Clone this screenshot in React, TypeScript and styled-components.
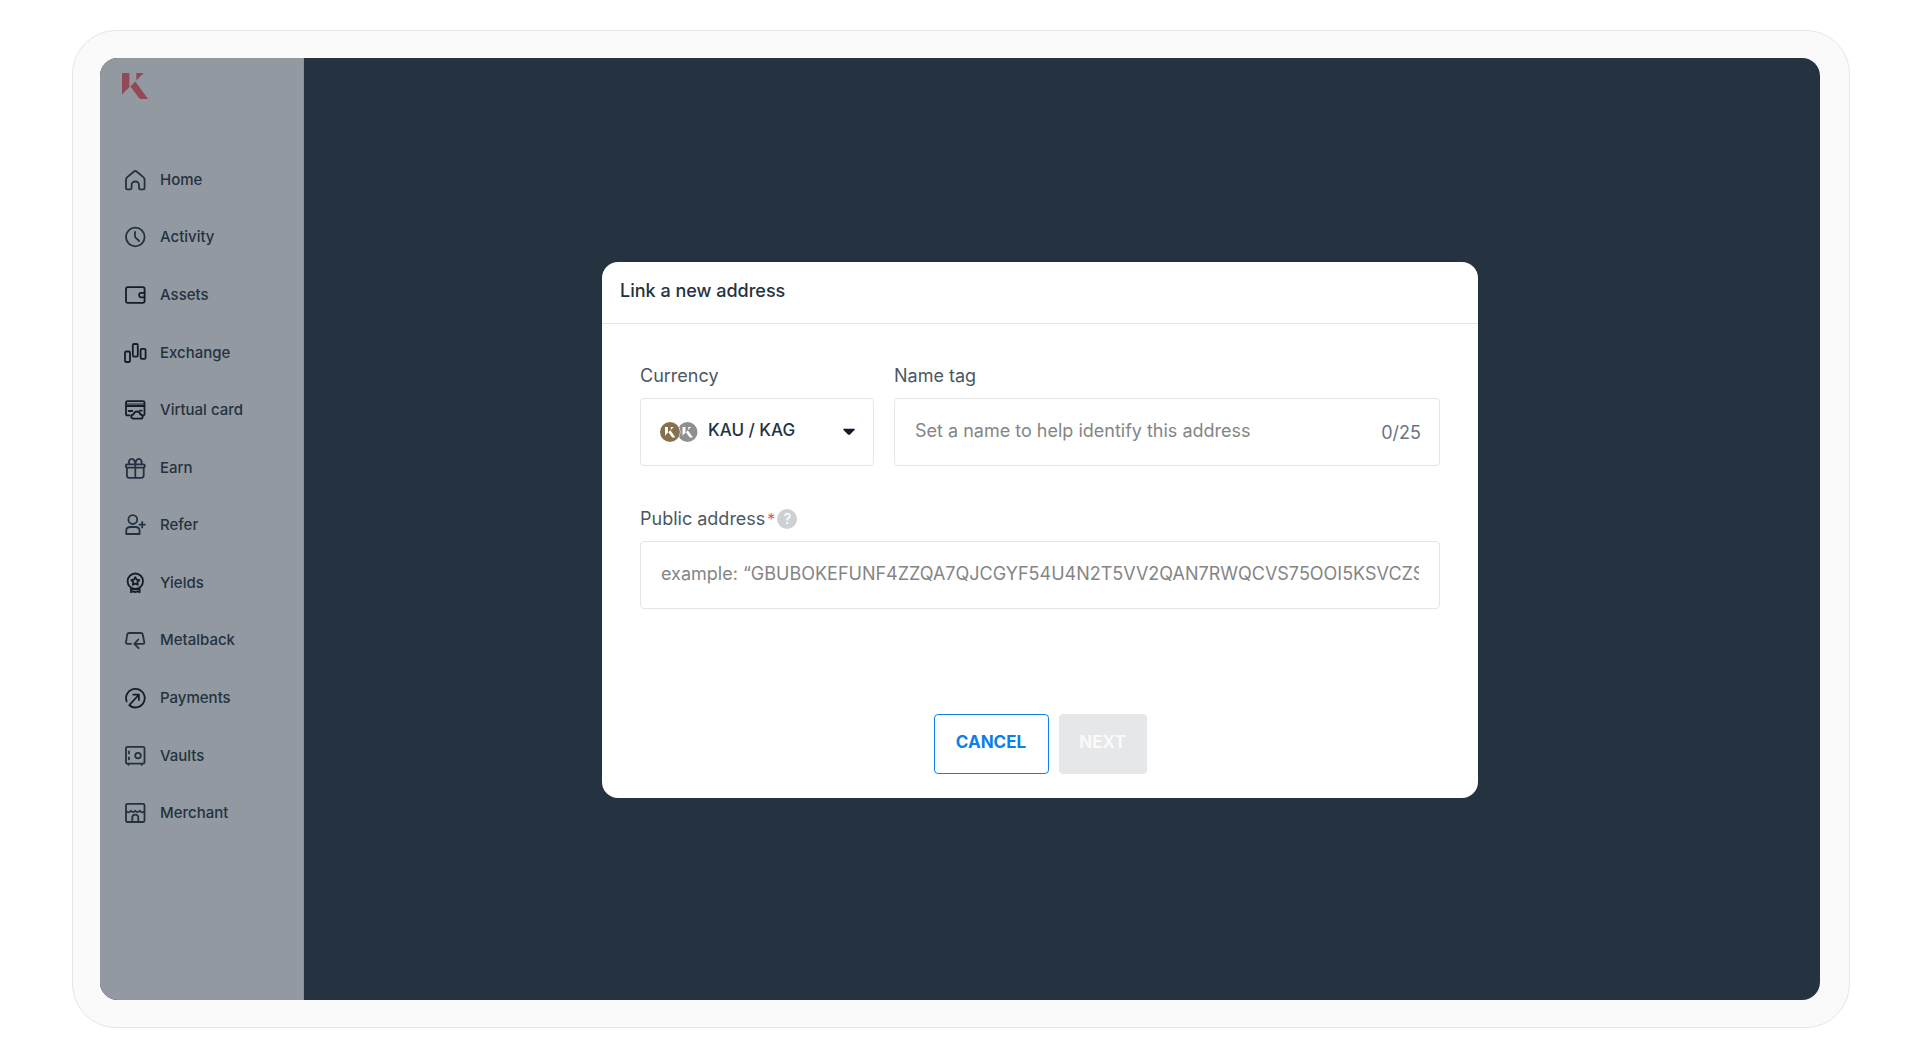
import React, { useState } from "react";
import styled, { createGlobalStyle } from "styled-components";

const ink = "#243240";

const GlobalStyle = createGlobalStyle`
  *, *::before, *::after { box-sizing: border-box; }
  body {
    margin: 0;
    background: #ffffff;
    color: ${ink};
    font-family: Inter, "Liberation Sans", sans-serif;
  }
`;

const Page = styled.div`
  display: flex;
  min-height: 100vh;
  padding: 30px 70px 30px 72px;
`;

const Device = styled.div`
  display: flex;
  flex: 1;
  padding: 27px 29px 27px 27px;
  border: 1px solid #e6e6e6;
  border-radius: 44px;
  background: #fafafa;
`;

const Screen = styled.div`
  display: flex;
  flex: 1;
  border-radius: 18px;
  overflow: hidden;
  background: #253240;
`;

const Sidebar = styled.aside`
  display: flex;
  flex-direction: column;
  flex: 0 0 204px;
  padding-bottom: 158px;
  border-right: 1px solid #869097;
  background: #9299a0;
`;

const Brand = styled.a`
  display: block;
  height: 93px;
  padding: 15px 22px;

  svg { display: block; }
`;

const Nav = styled.nav`
  display: flex;
  flex-direction: column;
  flex: 1;
`;

const NavLink = styled.a`
  display: flex;
  flex: 1;
  align-items: center;
  gap: 13px;
  padding-left: 23px;
  color: ${ink};
  font-size: 15px;
  font-weight: 500;
  line-height: 24px;
  text-decoration: none;
`;

const NavIcon = styled.svg<{ $dark?: boolean }>`
  flex: none;
  width: 24px;
  height: 24px;
  fill: none;
  stroke: ${(p) => (p.$dark ? "#171d26" : ink)};
  stroke-width: 1.8;
  stroke-linecap: round;
  stroke-linejoin: round;
`;

const Main = styled.main`
  display: flex;
  flex: 1;
  align-items: center;
  justify-content: center;
  padding: 2px 44px 0 0;
`;

const Dialog = styled.form`
  width: 100%;
  max-width: 876px;
  border-radius: 16px;
  background: #ffffff;
`;

const DialogHeader = styled.header`
  padding: 16px 18px 19px;
  border-bottom: 1px solid #e4e5e6;
`;

const Title = styled.h1`
  margin: 0;
  font-size: 18px;
  font-weight: 500;
  line-height: 26px;
`;

const Fields = styled.div`
  display: grid;
  grid-template-columns: 234px 1fr;
  gap: 40px 20px;
  padding: 39px 38px 0;
`;

const Field = styled.div<{ $wide?: boolean }>`
  display: flex;
  flex-direction: column;
  gap: 9px;
  grid-column: ${(p) => (p.$wide ? "1 / -1" : "auto")};
`;

const LabelRow = styled.div`
  display: flex;
  align-items: center;
  gap: 2px;
  color: #4b5764;
  font-size: 18px;
  line-height: 26px;
`;

const Required = styled.span`
  color: #f0555a;
  font-size: 16px;
`;

const Help = styled.button`
  width: 20px;
  height: 20px;
  padding: 0;
  border: 0;
  border-radius: 50%;
  background: #cdd1d4;
  color: #ffffff;
  font: 500 14px/20px Inter, sans-serif;
`;

const Box = styled.div`
  position: relative;
  display: flex;
  align-items: center;
  height: 68px;
  border: 1px solid #e4e5e6;
  border-radius: 4px;
`;

const TextInput = styled.input`
  flex: 1;
  min-width: 0;
  height: 100%;
  margin: 0 20px;
  padding: 0 0 4px;
  border: 0;
  outline: 0;
  background: transparent;
  color: ${ink};
  font: 400 18px/24px Inter, sans-serif;

  &::placeholder { color: #858585; opacity: 1; }
`;

const Counter = styled.span`
  padding: 2px 18px 0 0;
  color: #6b7480;
  font-size: 18px;
  line-height: 24px;
`;

const CurrencySelect = styled.select`
  appearance: none;
  width: 100%;
  height: 100%;
  padding: 0 40px 4px 67px;
  border: 0;
  outline: 0;
  background: transparent;
  color: ${ink};
  font: 500 17px/24px Inter, sans-serif;
`;

const Coins = styled.svg`
  position: absolute;
  left: 18px;
  pointer-events: none;
`;

const Caret = styled.svg`
  position: absolute;
  right: 18px;
  pointer-events: none;
`;

const Actions = styled.footer`
  display: flex;
  justify-content: center;
  gap: 10px;
  padding: 105px 0 24px;
`;

const Button = styled.button<{ $muted?: boolean }>`
  min-width: ${(p) => (p.$muted ? "88px" : "115px")};
  height: 60px;
  padding: 0 0 4px;
  border: 1px solid ${(p) => (p.$muted ? "#e6e7e9" : "#0b7fe8")};
  border-radius: 4px;
  background: ${(p) => (p.$muted ? "#e6e7e9" : "#ffffff")};
  color: ${(p) => (p.$muted ? "#fafafa" : "#0b7fe8")};
  font: 700 17px/24px Inter, sans-serif;
`;

type Item = { label: string; dark?: boolean; art: React.ReactNode };

const items: Item[] = [
  {
    label: "Home",
    art: <path d="M4.300 9.100 11 3.500q1.300-1 2.600 0l6.700 5.600q1.300 1.100 1.300 2.700V20q0 1.300-1.300 1.300h-3q-1.300 0-1.300-1.300v-3.300a3.700 3.200 0 0 0-7.400 0V20q0 1.300-1.300 1.300h-3Q3 21.300 3 20v-8.200q0-1.600 1.300-2.700z" />,
  },
  {
    label: "Activity",
    art: (
      <>
        <circle cx="12.300" cy="12" r="9.300" />
        <path d="M12 7v4.300q0 .7.6 1.300l3.600 3.400" />
      </>
    ),
  },
  {
    label: "Assets",
    dark: true,
    art: (
      <>
        <rect x="3" y="4.200" width="18.600" height="15.600" rx="1.800" />
        <path d="M21.600 9.900h-3.300a2.200 2.200 0 0 0 0 4.400h3.300" />
      </>
    ),
  },
  {
    label: "Exchange",
    dark: true,
    art: (
      <>
        <rect x="2" y="10.500" width="5" height="10.500" rx="1.300" />
        <rect x="9.800" y="3" width="5" height="12.600" rx="1.300" />
        <rect x="17.600" y="7.800" width="5" height="10" rx="1.300" />
      </>
    ),
  },
  {
    label: "Virtual card",
    dark: true,
    art: (
      <>
        <path d="M6.600 17.400H4.500Q3 17.400 3 16V4.600q0-1.400 1.500-1.400H20q1.500 0 1.500 1.400V16q0 1.200-.8 1.400M3 8h18.500M5.700 13h3.600M17 12.700h1.600" />
        <path d="M3 6h18.500" strokeWidth="1" />
        <path d="M10.400 20.700a1.900 1.900 0 0 1 0-4.200q1-3 3.600-3t3.400 3a1.900 1.900 0 0 1 .3 4.200z" />
      </>
    ),
  },
  {
    label: "Earn",
    art: (
      <>
        <rect x="2.800" y="8.400" width="19" height="3.200" rx="1.300" />
        <path d="M3.900 11.600v8q0 2.200 2.200 2.200h12.400q2.200 0 2.200-2.200v-8M12.300 8.400v13.400M6.300 8.200C5 4.800 7 2.800 8.800 2.800q3 0 3.500 5.600.5-5.600 3.500-5.600c1.800 0 3.800 2 2.500 5.400" />
      </>
    ),
  },
  {
    label: "Refer",
    art: (
      <>
        <circle cx="9.800" cy="6.600" r="4.400" />
        <path d="M3.200 21v-2.800q0-4.200 4.200-4.200h5q4.200 0 4.200 4.200V21zM19.200 9v5.400M16.500 11.700h5.400" />
      </>
    ),
  },
  {
    label: "Yields",
    dark: true,
    art: (
      <>
        <circle cx="12.300" cy="10.200" r="7.700" />
        <path d="m12.300 6.200 1.300 2.500 2.700.4-1.900 2 .4 2.700-2.500-1.200-2.500 1.200.4-2.700-1.900-2 2.700-.4zM8 17v4.200l2-.7 2.300.7 2.300-.7 2 .7V17M8.500 18.300h7.600" />
      </>
    ),
  },
  {
    label: "Metalback",
    art: <path d="M8 15.800H4.400Q2.800 15.800 3 14.300l1.300-8Q4.600 5 6 5h12q1.400 0 1.700 1.300l1.600 8q.2 1.500-1.300 1.500h-8.300M15.300 11.500l-4 4.300 4.300 4.400" />,
  },
  {
    label: "Payments",
    dark: true,
    art: <path d="M3.700 15.500A9.300 9.300 0 1 1 6.300 19.200L15.600 9M10.300 8.600h5.600v5.500" />,
  },
  {
    label: "Vaults",
    art: (
      <>
        <rect x="3" y="2.800" width="18.500" height="16.900" rx="1.500" />
        <circle cx="15" cy="11.600" r="2.800" />
        <path d="M6 7.500v1.900M6 13.500v1.900M5.500 20.300v.5M18.800 20.300v.5" />
      </>
    ),
  },
  {
    label: "Merchant",
    art: (
      <>
        <rect x="3" y="2.800" width="18.500" height="18.200" rx="1.500" />
        <path d="M3 10.400q2.700 2.200 4.900-.6 2.200 2.800 4.400 0 2.200 2.800 4.400 0 2.200 2.800 4.800.6M9.300 21v-4.400a3 3 0 0 1 6 0V21" />
      </>
    ),
  },
];

function KMark({ color }: { color: string }) {
  return (
    <g fill={color}>
      <path d="M0 0h7.400v14L0 21.600z" />
      <path d="M14.300 0h7.400l-7.400 7.600z" />
      <path d="m8.400 13.400 4.900-5L26 26h-7.200q-1 0-1.700-.9z" />
    </g>
  );
}

export default function App() {
  const [name, setName] = useState("");
  const [address, setAddress] = useState("");

  return (
    <>
      <GlobalStyle />
      <Page>
        <Device>
          <Screen>
            <Sidebar>
              <Brand href="#" aria-label="Dashboard">
                <svg width="26" height="26" viewBox="0 0 26 26" aria-hidden="true">
                  <KMark color="#934956" />
                </svg>
              </Brand>
              <Nav>
                {items.map((item) => (
                  <NavLink href="#" key={item.label}>
                    <NavIcon viewBox="0 0 24 24" $dark={item.dark} aria-hidden="true">
                      {item.art}
                    </NavIcon>
                    {item.label}
                  </NavLink>
                ))}
              </Nav>
            </Sidebar>
            <Main>
              <Dialog onSubmit={(e) => e.preventDefault()}>
                <DialogHeader>
                  <Title>Link a new address</Title>
                </DialogHeader>
                <Fields>
                  <Field>
                    <LabelRow>
                      <label htmlFor="currency">Currency</label>
                    </LabelRow>
                    <Box>
                      <CurrencySelect id="currency">
                        <option>KAU / KAG</option>
                      </CurrencySelect>
                      <Coins width="40" height="22" viewBox="0 0 40 22" aria-hidden="true">
                        <circle cx="28.500" cy="11" r="10" fill="#8d8f90" />
                        <g transform="translate(23.500 6) scale(.4)">
                          <KMark color="#ffffff" />
                        </g>
                        <circle cx="11" cy="11" r="10.500" fill="#ffffff" />
                        <circle cx="11" cy="11" r="10" fill="#85724c" />
                        <g transform="translate(6 6) scale(.4)">
                          <KMark color="#ffffff" />
                        </g>
                      </Coins>
                      <Caret width="12" height="8" viewBox="0 0 12 8" aria-hidden="true">
                        <path d="M1 .8h10q1.300.2.500 1.200L7 6.600q-1 .9-2 0L.5 2Q-.3 1 1 .8z" fill="#0d1b2c" />
                      </Caret>
                    </Box>
                  </Field>
                  <Field>
                    <LabelRow>
                      <label htmlFor="tag">Name tag</label>
                    </LabelRow>
                    <Box>
                      <TextInput
                        id="tag"
                        maxLength={25}
                        value={name}
                        onChange={(e) => setName(e.target.value)}
                        placeholder="Set a name to help identify this address"
                      />
                      <Counter>{name.length}/25</Counter>
                    </Box>
                  </Field>
                  <Field $wide>
                    <LabelRow>
                      <label htmlFor="address">Public address</label>
                      <Required>*</Required>
                      <Help type="button" aria-label="About public addresses">?</Help>
                    </LabelRow>
                    <Box>
                      <TextInput
                        id="address"
                        value={address}
                        onChange={(e) => setAddress(e.target.value)}
                        placeholder="example: “GBUBOKEFUNF4ZZQA7QJCGYF54U4N2T5VV2QAN7RWQCVS75OOI5KSVCZS"
                      />
                    </Box>
                  </Field>
                </Fields>
                <Actions>
                  <Button type="button">CANCEL</Button>
                  <Button type="submit" $muted disabled>NEXT</Button>
                </Actions>
              </Dialog>
            </Main>
          </Screen>
        </Device>
      </Page>
    </>
  );
}
